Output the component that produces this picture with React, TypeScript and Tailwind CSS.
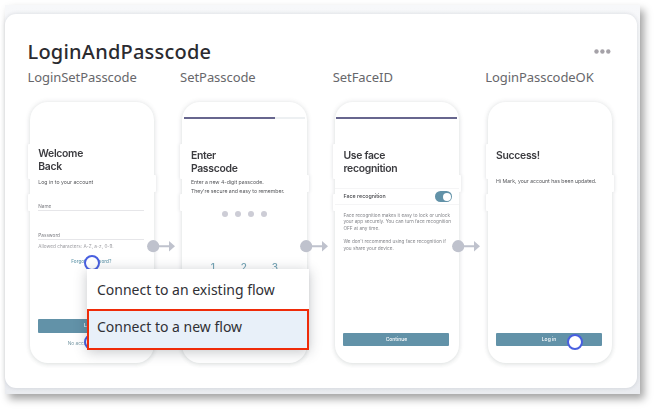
import type { ReactNode } from "react";

function Ring({ className }: { className: string }) {
  return <span className={`absolute size-4 rounded-full border-[2.5px] border-[#485fe0] bg-white ${className}`} />;
}

function Connector() {
  return (
    <svg className="absolute left-[117.5px] top-[138px] z-10" width="29" height="13" viewBox="0 0 29 13">
      <circle cx="6.2" cy="6.2" r="6.1" fill="#bfc2cd" />
      <path d="M11 5.2h11V1l6 5.2-6 5.2V7.2H11z" fill="#bfc2cd" />
    </svg>
  );
}

function Progress({ className }: { className: string }) {
  return (
    <div className="absolute left-[1.5px] top-[15.3px] h-[2px] w-[121px] bg-[#edf0f2]">
      <div className={`h-full bg-[#67668e] ${className}`} />
    </div>
  );
}

function Phone({ label, children, next, overlay }: { label: string; children: ReactNode; next?: boolean; overlay?: ReactNode }) {
  return (
    <section className="w-[152.6px] shrink-0">
      <h2 className="h-[34.2px] whitespace-nowrap text-[13px] leading-[18px] tracking-[-0.06px] text-[#67676b]">{label}</h2>
      <div className="relative ml-[2.3px] h-[261px] w-[124.5px] rounded-[18px] bg-white shadow-[0_0_4px_1px_rgba(60,70,75,0.1),0_2px_4px_rgba(60,80,75,0.07)]">
        <span className="absolute -left-[2px] top-[42px] h-[35px] w-[3px] rounded-l-[1px] bg-white shadow-[-2px_0_3px_rgba(60,70,75,0.05)]" />
        <span className="absolute -left-[2px] top-[92px] h-[17px] w-[3px] rounded-l-[1px] bg-white shadow-[-2px_0_3px_rgba(60,70,75,0.05)]" />
        <span className="absolute -right-[2px] top-[73px] h-[17px] w-[3px] rounded-r-[1px] bg-white shadow-[2px_0_3px_rgba(60,70,75,0.05)]" />
        <div className="flex h-full flex-col whitespace-nowrap pl-[8.5px] pr-[10px] font-['Inter','Liberation_Sans',sans-serif] blur-[0.45px]">
          {children}
        </div>
        {overlay}
        {next && <Connector />}
      </div>
    </section>
  );
}

export default function App() {
  return (
    <main className="relative h-[409px] w-[655px] overflow-hidden bg-white pl-[5px] pt-[5px] font-['Noto_Sans','Open_Sans',sans-serif]">
      <div className="h-[389px] w-[635px] bg-gradient-to-b from-[#f7f8fa] to-[#eaecf0] pt-[9px] shadow-[4px_5px_8px_rgba(0,0,0,0.36)]">
        <div className="h-[374px] w-[632px] rounded-[11px] bg-white pl-[22.5px] pt-[24px] shadow-[0_0_4px_rgba(40,50,70,0.16)]">
          <header className="flex h-[29.5px] items-start justify-between pr-[26.5px]">
            <h1 className="text-[20px] font-medium leading-[28px] tracking-[0.22px] text-[#2b2b30]">LoginAndPasscode</h1>
            <svg className="mt-[11px]" width="17" height="5" viewBox="0 0 17 5" fill="#a5a2a8">
              <circle cx="2.5" cy="2.5" r="2.2" />
              <circle cx="8.4" cy="2.5" r="2.2" />
              <circle cx="14.3" cy="2.5" r="2.2" />
            </svg>
          </header>
          <div className="flex">
            <Phone
              label="LoginSetPasscode"
              next
              overlay={
                <>
                  <Ring className="left-[54px] top-[153.3px]" />
                  <Ring className="left-[54px] top-[232.8px]" />
                </>
              }
            >
              <div className="mt-[45.7px] text-[10.4px] font-semibold leading-[13px] tracking-[-0.3px] text-[#3c3c40]">Welcome<br />Back</div>
              <div className="mt-[4px] text-[5.2px] leading-[10px] text-[#55565a]">Log in to your account</div>
              <div className="mt-[15.6px] border-b border-[#e6e6e9] text-[4.7px] leading-[7px] text-[#7a7b80]">Name</div>
              <div className="mt-[21.5px] border-b border-[#e6e6e9] text-[4.7px] leading-[7px] text-[#7a7b80]">Password</div>
              <div className="mt-[3px] text-[4.7px] leading-[7px] text-[#9c9ca1]">Allowed characters: A-Z, a-z, 0-9.</div>
              <div className="mt-[7.2px] text-center text-[4.7px] font-medium leading-[7px] text-[#6599ac]">Forgot password?</div>
              <div className="mt-[54.8px] rounded-[1px] bg-[#6292a8] text-center text-[5px] font-medium leading-[13.3px] text-white">Log in</div>
              <div className="mt-[7.5px] text-center text-[4.8px] leading-[7px] text-[#7899a5]">No account? Sign up</div>
            </Phone>
            <Phone label="SetPasscode" next>
              <Progress className="w-[91px]" />
              <div className="mt-[47.1px] text-[10.4px] font-semibold leading-[13px] tracking-[-0.3px] text-[#3c3c40]">Enter<br />Passcode</div>
              <div className="mt-[3.5px] text-[5.15px] leading-[8.4px] text-[#55565a]">Enter a new 4-digit passcode.<br />They're secure and easy to remember.</div>
              <div className="ml-[31px] mt-[15.6px] flex gap-[7px]">
                {[0, 1, 2, 3].map((dot) => <span key={dot} className="size-[6px] rounded-full bg-[#cdcdd6]" />)}
              </div>
              <div className="mt-[43px] grid grid-cols-[31px_31px_31px] pl-[6.5px] text-center text-[10px] font-medium leading-[14px] text-[#76a5b6]">
                <span>1</span><span>2</span><span>3</span>
              </div>
              <div className="mt-[66.5px] text-center text-[9.5px] leading-[14px] text-[#82acbc]">0</div>
            </Phone>
            <Phone label="SetFaceID" next>
              <Progress className="w-full" />
              <div className="mt-[47.1px] text-[10.4px] font-semibold leading-[13px] tracking-[-0.3px] text-[#3c3c40]">Use face<br />recognition</div>
              <div className="-ml-[8.5px] -mr-[10px] mt-[13.5px] flex h-[17px] items-center justify-between border-y border-[#f5f5f6] pl-[8.5px] pr-[7px]">
                <span className="text-[5.3px] font-medium text-[#47484c]">Face recognition</span>
                <span className="flex h-[11px] w-[17px] items-center justify-end rounded-full bg-[#6292a8] p-[1px]">
                  <span className="size-[8.5px] rounded-full bg-white" />
                </span>
              </div>
              <div className="mt-[6.6px] text-[4.7px] leading-[6.6px] text-[#838489]">Face recognition makes it easy to lock or unlock<br />your app securely. You can turn face recognition<br />OFF at any time.</div>
              <div className="mt-[6.6px] text-[4.7px] leading-[7px] text-[#838489]">We don't recommend using face recognition if<br />you share your device.</div>
              <div className="mt-[80.4px] rounded-[1px] bg-[#6292a8] text-center text-[5px] font-medium leading-[13.3px] text-white">Continue</div>
            </Phone>
            <Phone label="LoginPasscodeOK" overlay={<Ring className="left-[79.5px] top-[232.8px]" />}>
              <div className="mt-[47.1px] text-[10.4px] font-semibold leading-[13px] tracking-[-0.3px] text-[#3c3c40]">Success!</div>
              <div className="mt-[14.3px] text-[5.15px] leading-[10px] text-[#55565a]">Hi Mark, your account has been updated.</div>
              <div className="mt-[146.8px] rounded-[1px] bg-[#6292a8] text-center text-[5px] font-medium leading-[13.3px] text-white">Log in</div>
            </Phone>
          </div>
        </div>
      </div>
      <div role="menu" className="absolute left-[87px] top-[269px] z-20 w-[222px] bg-white text-[14px] leading-[20px] text-[#303035] shadow-[0_2px_12px_rgba(45,55,65,0.28)]">
        <div role="menuitem" className="h-[40px] whitespace-nowrap pl-[10px] pt-[11px]">Connect to an existing flow</div>
        <div role="menuitem" className="h-[41px] whitespace-nowrap border-2 border-[#ef2b09] bg-[#e8f0f9] pl-[8px] pt-[6px]">Connect to a new flow</div>
      </div>
    </main>
  );
}
